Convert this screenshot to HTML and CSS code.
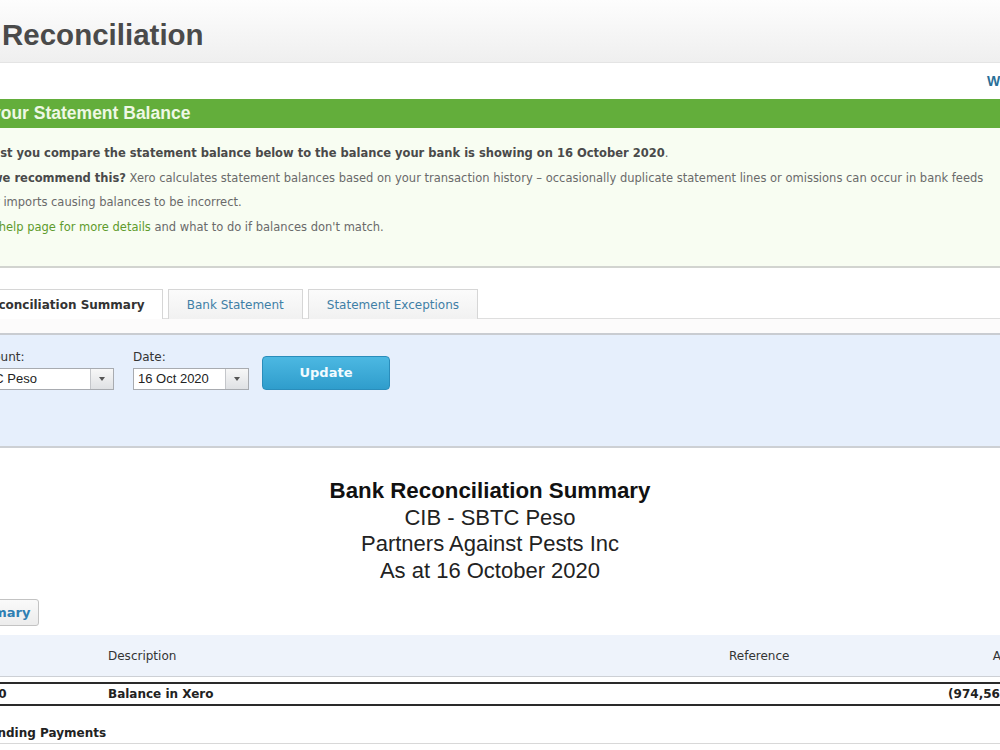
FILE: index.html
```html
<!DOCTYPE html>
<html lang="en">
<head>
  <meta charset="UTF-8" />
  <title>Bank Reconciliation</title>
  <link rel="stylesheet" href="styles.css">
</head>
<body>
  <header class="page-head">
    <h1>Reconciliation</h1>
  </header>

  <div class="help-row">
    <a href="#" class="help-link">What's this?</a>
  </div>

  <section class="notice">
    <h2 class="notice-title">your Statement Balance</h2>
    <div class="notice-body">
      <p><b>ust you compare the statement balance below to the balance your bank is showing on 16 October 2020</b>.</p>
      <p><b>we recommend this?</b> Xero calculates statement balances based on your transaction history &ndash; occasionally duplicate statement lines or omissions can occur in bank feeds</p>
      <p class="wrap">or imports causing balances to be incorrect.</p>
      <p class="last">a <a href="#" class="green-link">help page for more details</a> and what to do if balances don't match.</p>
    </div>
  </section>

  <nav class="tabs">
    <a href="#" class="tab active">Reconciliation Summary</a>
    <a href="#" class="tab">Bank Statement</a>
    <a href="#" class="tab">Statement Exceptions</a>
  </nav>
  <div class="tab-gap"></div>

  <form class="filters">
    <div class="field-group account">
      <label>Account:</label>
      <div class="combo">
        <span class="combo-text">SBTC Peso</span>
        <span class="combo-btn"><i class="arrow"></i></span>
      </div>
    </div>
    <div class="field-group date">
      <label>Date:</label>
      <div class="combo">
        <span class="combo-text">16 Oct 2020</span>
        <span class="combo-btn"><i class="arrow"></i></span>
      </div>
    </div>
    <button type="button" class="update-btn">Update</button>
  </form>

  <div class="report-head">
    <div class="report-title">Bank Reconciliation Summary</div>
    <div>CIB - SBTC Peso</div>
    <div>Partners Against Pests Inc</div>
    <div>As at 16 October 2020</div>
  </div>

  <div class="toolbar">
    <button type="button" class="small-btn">Summary</button>
  </div>

  <div class="report">
    <div class="report-row report-header">
      <div>Date</div>
      <div>Description</div>
      <div>Reference</div>
      <div class="amount">Amount</div>
    </div>
    <div class="report-row total">
      <div class="date-cell">16 Oct 2020</div>
      <div>Balance in Xero</div>
      <div></div>
      <div class="amount">(974,563.10)</div>
    </div>
    <div class="report-section">Outstanding Payments</div>
  </div>
</body>
</html>
```

FILE: styles.css
```css
body {
  margin: 0;
  width: 1000px;
  height: 750px;
  overflow: hidden;
  background: #fff;
  font-family: 'DejaVu Sans', Verdana, sans-serif;
  color: #333;
}

a {
  text-decoration: none;
}

/* Page header */
.page-head {
  box-sizing: border-box;
  height: 63px;
  padding: 20px 0 0 2px;
  background: linear-gradient(#fdfdfd, #efefef);
  border-bottom: 1px solid #e4e4e4;
}
.page-head h1 {
  margin: 0;
  font-family: 'Liberation Sans', Arial, sans-serif;
  font-size: 29.5px;
  line-height: 29px;
  font-weight: bold;
  color: #4a4a4a;
}

.help-row {
  height: 36px;
  display: flex;
  align-items: center;
  padding-left: 987px;
  white-space: nowrap;
}
.help-link {
  font-family: 'Liberation Sans', Arial, sans-serif;
  font-weight: bold;
  font-size: 14px;
  color: #2a6f98;
}

/* Statement balance notice */
.notice-title {
  margin: 0;
  height: 29px;
  display: flex;
  align-items: center;
  background: #63ae3b;
  font-family: 'Liberation Sans', Arial, sans-serif;
  font-size: 17.5px;
  font-weight: bold;
  color: #eef8e4;
  text-indent: -9px;
  white-space: nowrap;
}
.notice-body {
  box-sizing: border-box;
  height: 140px;
  padding-top: 13px;
  background: #f8fdf2;
  border-bottom: 2px solid #d2d4d0;
  font-size: 11.5px;
  line-height: 24.5px;
  color: #6a6a6a;
  white-space: nowrap;
  overflow: hidden;
}
.notice-body p {
  margin: 0 0 0 -8px;
}
.notice-body p.wrap {
  margin-left: -12px;
}
.notice-body p.last {
  margin-left: -12px;
}
.notice-body b {
  color: #4a4a4a;
}
.green-link {
  color: #5e9b2c;
}

/* Tabs */
.tabs {
  display: flex;
  gap: 5px;
  margin-top: 21px;
  height: 29px;
  border-bottom: 1px solid #dedede;
  white-space: nowrap;
}
.tab {
  box-sizing: border-box;
  height: 30px;
  padding: 0 18px;
  display: flex;
  align-items: center;
  font-size: 12px;
  color: #3f7fa6;
  background: linear-gradient(#fbfbfb, #f1f1f1);
  border: 1px solid #d6d6d6;
  border-bottom: none;
}
.tab.active {
  margin-left: -39px;
  padding: 0 17px 0 19px;
  background: #fff;
  font-weight: bold;
  color: #333;
}
.tab-gap {
  height: 14px;
  background: #fcfbfb;
}

/* Filter panel */
.filters {
  box-sizing: border-box;
  height: 115px;
  margin: 0;
  display: flex;
  align-items: flex-start;
  padding-top: 15px;
  background: #e6effc;
  border-top: 2px solid #c9ccd1;
  border-bottom: 2px solid #cdd0d4;
}
.field-group label {
  display: block;
  height: 14px;
  margin-bottom: 4px;
  font-size: 12px;
  line-height: 14px;
  color: #333;
}
.field-group.account {
  margin-left: -28px;
  margin-right: 19px;
}
.field-group.date {
  margin-right: 13px;
}
.combo {
  box-sizing: border-box;
  height: 22px;
  display: flex;
  background: #fff;
  border: 1px solid #a8abb0;
}
.account .combo {
  width: 150px;
  margin-left: -8px;
}
.date .combo {
  width: 116px;
}
.combo-text {
  flex: 1;
  padding-left: 4px;
  font-family: 'Liberation Sans', Arial, sans-serif;
  font-size: 13px;
  line-height: 20px;
  color: #222;
  white-space: nowrap;
}
.combo-btn {
  width: 22px;
  display: flex;
  align-items: center;
  justify-content: center;
  background: linear-gradient(#f7f7f7, #dfe1e4);
  border-left: 1px solid #c4c6ca;
}
.arrow {
  width: 0;
  height: 0;
  border-left: 3.5px solid transparent;
  border-right: 3.5px solid transparent;
  border-top: 4px solid #555;
}
.update-btn {
  box-sizing: border-box;
  width: 128px;
  height: 34px;
  margin-top: 6px;
  border: 1px solid #2a8dbb;
  border-radius: 4px;
  background: linear-gradient(#4cb8e2, #2f9dcc);
  color: #f2fbff;
  font-family: 'DejaVu Sans', Verdana, sans-serif;
  font-size: 13px;
  font-weight: bold;
  padding-bottom: 2px;
}

/* Report heading */
.report-head {
  margin-top: 30px;
  padding-right: 20px;
  text-align: center;
  font-family: 'Liberation Sans', Arial, sans-serif;
  font-size: 22px;
  line-height: 26.5px;
  color: #222;
}
.report-title {
  font-weight: bold;
  font-size: 22.3px;
  color: #111;
}

.toolbar {
  margin-top: 15px;
  height: 27px;
}
.small-btn {
  box-sizing: border-box;
  height: 27px;
  margin-left: -48px;
  padding: 0 8px;
  border: 1px solid #c3c3c3;
  border-radius: 3px;
  background: linear-gradient(#fafafa, #ececec);
  font-family: 'DejaVu Sans', Verdana, sans-serif;
  font-size: 13px;
  font-weight: bold;
  color: #2f7fb3;
}

/* Report table */
.report {
  margin-top: 9px;
  margin-left: -70px;
  width: 1110px;
  font-size: 12px;
}
.report-row {
  display: grid;
  grid-template-columns: 178px 621px 1fr 140px;
  align-items: center;
  white-space: nowrap;
}
.report-row .amount {
  text-align: right;
}
.report-header {
  height: 41px;
  background: #eef3fb;
  border-bottom: 1px solid #cdd0d5;
  color: #333;
}
.report-header > div:first-child {
  visibility: hidden;
}
.total {
  box-sizing: border-box;
  height: 24px;
  margin-top: 5px;
  border-top: 2px solid #2a2a2a;
  border-bottom: 2px solid #2a2a2a;
  font-weight: bold;
  color: #222;
}
.total .date-cell {
  margin-left: -5px;
}
.total .amount {
  padding-right: 5px;
}
.report-section {
  box-sizing: border-box;
  height: 38px;
  display: flex;
  align-items: flex-end;
  padding: 0 0 3px 22px;
  border-bottom: 1px solid #d8d8d8;
  font-weight: bold;
  color: #222;
}
```
